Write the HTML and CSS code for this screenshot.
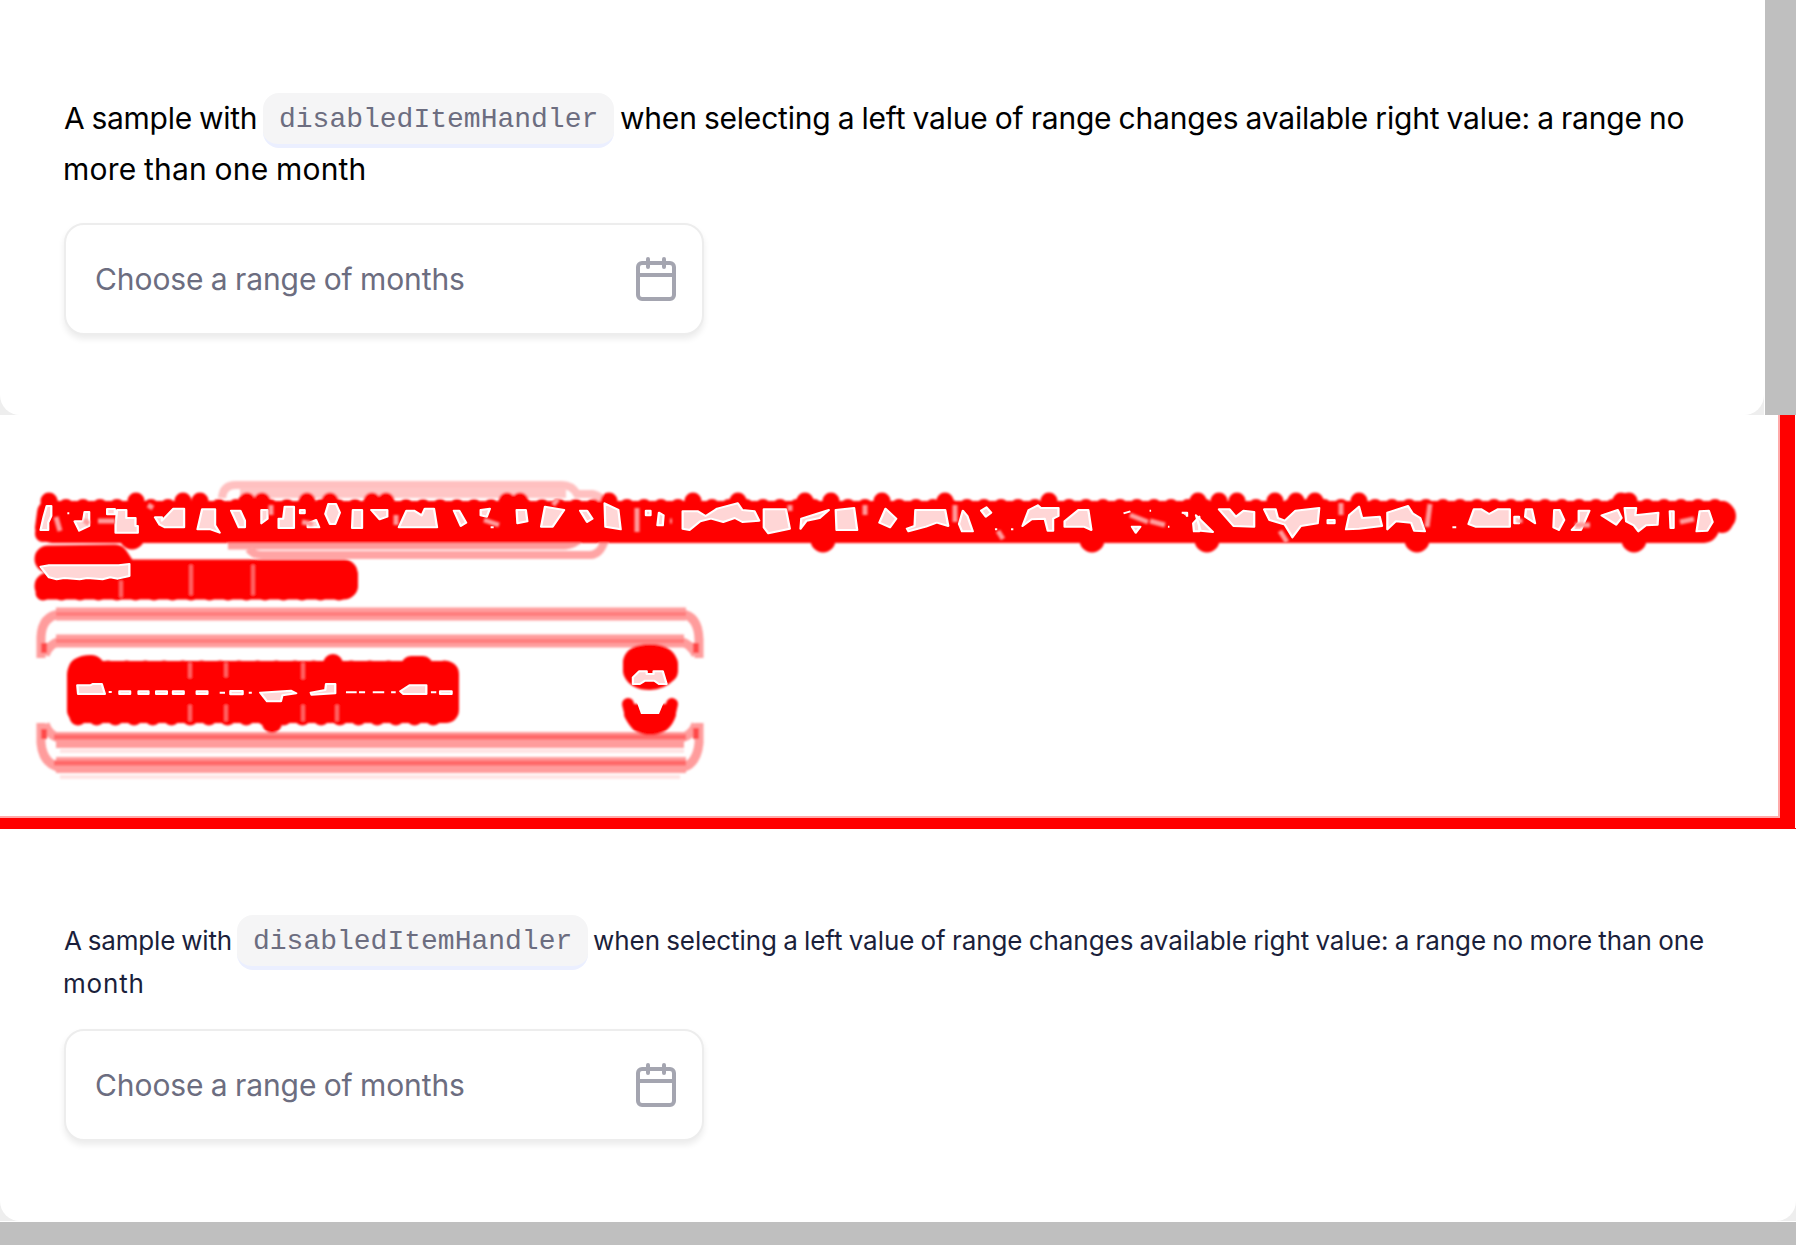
FILE: index.html
```
<!DOCTYPE html>
<html lang="en">
<head>
<meta charset="utf-8">
<title>Month range input</title>
<link rel="stylesheet" href="styles.css">
</head>
<body>
<section class="panel before">
  <div class="card">
    <p class="line"><span class="lead">A sample with</span><code class="code">disabledItemHandler</code><span class="rest">when selecting a left value of range changes available right value: a range no</span></p>
    <p class="line tail">more than one month</p>
    <div class="field">
      <span class="placeholder">Choose a range of months</span>
      <svg class="calendar" width="40" height="46" viewBox="0 0 40 46" fill="none" stroke="#a4a5b0" stroke-width="4" stroke-linecap="round"><rect x="2" y="7" width="36" height="36" rx="4"/><path d="M2 19H38M12 3V11M28 3V11"/></svg>
    </div>
  </div>
</section>

<section class="panel diff">
  <svg width="1796" height="415" viewBox="0 0 1796 415" fill="none">
    <defs><filter id="soft" x="-2%" y="-2%" width="104%" height="104%"><feGaussianBlur stdDeviation="1"/></filter></defs>
    <g filter="url(#soft)">
      <path stroke="#ffc0c0" stroke-width="8" d="M222 83Q223 70 236 70H562Q572 70 577 79H592Q605 82 607 94"/>
      <path stroke="#ffc6c6" stroke-width="10" d="M240 78H566"/>
      <path stroke="#ff9c9c" stroke-width="9" d="M228 130H565Q574 129 580 123"/>
      <path stroke="#ffa4a4" stroke-width="8" d="M249 134Q253 140 262 140H590Q603 140 607 116"/>
      <g stroke="#ff9c9c" stroke-width="13">
        <path d="M56 199H686M56 226H684"/>
        <path stroke-width="16" d="M56 325H684M56 350H686"/>
        <path stroke-width="9" d="M41 243V222Q42 201 60 199M45 240Q49 229 60 226M682 199Q698 201 699 224V243M680 226Q691 229 696 240"/>
        <path stroke-width="9" d="M45 309Q49 321 60 323M41 308V328Q43 350 62 353M680 323Q692 321 696 309M682 353Q697 349 699 328V308"/>
      </g>
      <path stroke="#ff7c7c" stroke-width="4" d="M56 199H686M56 226H684"/>
      <path stroke="#ff6868" stroke-width="5" d="M54 322H686M54 348H686"/>
      <path stroke="#ff4a4a" stroke-width="6" d="M44 228V238M44 314V324M696 228V238M696 313V324"/>
      <path stroke="#ffe4e4" stroke-width="4" d="M60 336H684M60 362H680"/>

      <g stroke="#f00" fill="#f00" stroke-linecap="round" stroke-linejoin="round">
        <path stroke-width="28" d="M51 98L49 113"/>
        <path stroke-width="30" d="M52 101H1721M52 113H1704"/>
        <path stroke-width="16" stroke-dasharray="0 17" d="M43 119H1706M66 92H1722"/>
        <path stroke-width="17" d="M49 86v1M136 86v1M183 86v1M200 86v1M247 86v1M262 86v1M307 86v1M330 86v1M372 86v1M386 86v1M507 86v1M520 86v1M609 86v1M693 86v1M738 86v1M805 86v1M831 86v1M882 86v1M945 86v1M1049 86v1M1198 86v1M1219 86v1M1237 86v1M1275 86v1M1296 86v1M1315 86v1M1359 86v1M1621 86v1M1629 86v1"/>
        <path stroke-width="22" d="M1722 97V107"/>
        <path stroke-width="25" d="M132 112V122M823 111V125M1092 111V125M1207 111V125M1417 111V125M1634 111V125"/>
        <path stroke-width="27" d="M48 144L115 143L125 158H344M48 171H344"/>
        <path stroke-width="15" stroke-dasharray="0 18.5" d="M43 178H350M137 155H350"/>
        <path stroke-width="24" d="M346 160V171"/>
        <rect stroke="none" x="67" y="246" width="392" height="62" rx="13"/>
        <path stroke-width="28" d="M82 256Q85 254 91 254"/>
        <path stroke-width="17" stroke-dasharray="0 18.7" d="M78 302H452M108 254H452"/>
        <path stroke-width="20" d="M333 249V270M411 251H423M272 290V308"/>
        <path stroke-width="24" d="M635 247Q637 241 650 241Q663 241 666 249V256Q659 263 650 263Q638 263 635 256Z"/>
        <path stroke-width="12" d="M628 289L631 301Q637 314 650 314Q664 314 669 302L672 289"/>
        <path stroke-width="16" d="M632 299L639 309H661L668 299"/>
      </g>
      <path stroke="#ff7070" stroke-width="3" d="M190 248V263M190 290V306M226 248V262M226 290V306M303 248V264M303 290V306M337 290V306M121 166V182M191 150V180M253 150V180"/>
    </g>
    <g fill="#ffd6d6" stroke="#fff" stroke-width="6" stroke-linejoin="round">
      <g transform="translate(0 45) scale(.3827 .3333)">
        <path d="M122 138h12v30l-8 20v22h-20l8-40zM176 160h5M195 184h22l4-28h12v42l-26 14zM280 147h20v16h-20zM306 150h24v24h24v24h6v20h-58v-24zM405 172h18v10l30-36h28v56h-50l-14-8zM528 148h34v48l12 22-24-10h-34zM604 152h24l12 30v20h-16zM683 150h16v26l-16 14zM744 140h24v64h-40v-28h12zM784 150h12v10h-12zM804 190l22-10 8 22h-30zM858 132h20l10 26-12 34h-14l-12-30zM922 150h24v54h-26zM970 150h42v20l-20 8zM1062 152h20l20 14 8-20h24l8 56h-100zM1186 152h14l18 36-14 10zM1256 150l24-4-8 24-16-4zM1282 202h8M1350 150h24l4 34-26 6zM1424 140l50 10-30 50h-30zM1516 152h18l14 24-14 10z"/>
        <path d="M106 320l22-4h182l28-4v36l-30 8-20-4-20 6-40-4-20 4-40-4-20 4-20-6z"/>
        <path d="M202 676h34l6-4h24l8 30h-70zM284 696h8M312 694h28v8h-28zM362 694h26v8h-26zM408 694h28v8h-28zM452 694h28v8h-28zM514 694h28v8h-28zM574 698h14M602 693h32v10h-32zM650 698h8M680 698l80-6 14 8-36 6-4 18h-36zM812 698l38-8 2-18h24v28l-62 4zM904 697h28M938 697h16M974 697h30M1022 697h12M1046 694l24-18h44v26h-60zM1126 697h14M1150 694h30v8h-30z"/>
      </g>
      <g transform="translate(600 45) scale(.3827 .3333)">
        <path d="M12 130l36 20 6 58-40-8zM120 152h12v14h-12zM154 158l12 8-2 30h-14zM216 154h40l20 14 30-22 54-16 12 20 32 4 12 28-44 4-20-12-30 12-32-10-28 8-28 26-18-4zM428 148h58l10 58-56 14-12-18zM526 176l72-26-24 24-34 8-16 24zM616 150l48-6 8 66h-54zM746 146l28 30-16 26-28-14zM824 150h78l8 48-30-10-28 12-46 14-4-8 20-8zM948 152l12 16 14 46h-28l-8-22zM996 152l14-10 12 16-14 12zM1032 208h6M1074 208h6M1120 150l24-14 8 8h46v24l-14 8v36h-14l-8-36-34 2-24 20zM1250 150h26l8 60-20-10h-50v-16zM1368 160l18-6M1436 152h4M1390 200h22l-12 18zM1484 200h4M1520 158h14v12M1550 190l16-20v44h-14z"/>
        <path d="M86 652l16-18h20v8h18v-8h24l10 38h-20l-12-10h-24l-14 10H86z"/>
      </g>
      <path fill="#fff" stroke="none" d="M636 285Q638 279 650 279Q662 279 664 287L659 299H641Z"/>
      <g transform="translate(1196 45) scale(.3827 .3333)">
        <path d="M0 166l44 50-32-4zM60 148h28l16 22 20-18 28 4v44l-54-2zM178 148h30l6 26 18 8 28-30 62-8-4 46-44 8-22 34-20-38-40-14zM344 180h18v10h-18zM392 208l8-42 26-26 8 34 46-4 6 28-60 8zM500 158l54-20 12 22 20 14 12 40-28-2-8-24-40-4-22 24zM670 202h10M712 192l14-44h20l20 14 22-14h32v52h-90zM832 170h12v20h-12zM862 148h16l8 42-26-20zM936 150h14l12 30-14 30-14-8zM1000 152h28l-22 58h-24l18-22zM1060 166l42-16 10 24-14 20zM1120 144h30l-2 22 60-8-2 36-30 2-20 18-12-18-20-12zM1238 154h10v50h-8zM1316 154l24-2 10 34-14 26-28 2z"/>
      </g>
    </g>
    <path filter="url(#soft)" stroke="#ff9c9c" stroke-width="5" d="M56 102L60 116M84 105L89 109M98 106L115 106M148 90L153 93M271 90V100M302 107L313 109M484 105L499 110M553 90L558 84M637 93V117M790 90V96M865 90V100M955 90V107M1130 100L1148 107M1280 116L1287 127M1341 88V100M1430 89L1427 112M1575 110H1590M1680 107L1694 104M396 100V110M670 106H672M998 116L1003 124M1150 106L1165 110M1520 104V108"/>
    <path fill="#ffaaaa" d="M1778 0h3v403H0v-2h1778z"/>
    <path fill="#f00" d="M1780 0h15v413h1v1H0V403H1780z"/>
  </svg>
</section>

<section class="panel after">
  <div class="card">
    <p class="line"><span class="lead">A sample with</span><code class="code">disabledItemHandler</code><span class="rest">when selecting a left value of range changes available right value: a range no more than one</span></p>
    <p class="line tail">month</p>
    <div class="field">
      <span class="placeholder">Choose a range of months</span>
      <svg class="calendar" width="40" height="46" viewBox="0 0 40 46" fill="none" stroke="#a4a5b0" stroke-width="4" stroke-linecap="round"><rect x="2" y="7" width="36" height="36" rx="4"/><path d="M2 19H38M12 3V11M28 3V11"/></svg>
    </div>
  </div>
</section>
</body>
</html>
```
FILE: styles.css
```
* { box-sizing: border-box; }
body { margin: 0; width: 1796px; background: #fff; font-family: Inter, "Liberation Sans", sans-serif; }
p { margin: 0; }

.panel { display: flex; height: 415px; overflow: hidden; }
.panel > svg { display: block; }
.before { background: linear-gradient(to right, #eee 1764px, #fff 1764px, #fff 1765px, #bfbfbf 1765px); }
.after { background: linear-gradient(to bottom, #eee 391px, #fff 391px, #fff 392px, #bfbfbf 392px); }

.card { background: #fff; padding: 92px 64px 0; border-radius: 0 0 20px 20px; }
.before .card { width: 1764px; height: 415px; }
.after .card { width: 1796px; height: 391px; padding-top: 85px; }

.line { display: flex; align-items: center; white-space: nowrap; word-spacing: -1px; }
.before .line { height: 51px; font-size: 30px; color: #000; }
.after .line { height: 51px; font-size: 26px; color: #1b1f3b; }
.lead { flex: none; width: 199px; letter-spacing: -0.3px; }
.after .lead { width: 173px; letter-spacing: -0.2px; }
.rest { margin-left: 6px; letter-spacing: -0.21px; }
.after .rest { margin-left: 5px; letter-spacing: -0.06px; }
.code {
  flex: none; width: 351px; height: 55px; margin-top: 6px; padding: 0 16px; line-height: 53px;
  font-family: "Liberation Mono", monospace; font-size: 28px; word-spacing: 0;
  color: #6c6d80; background: #f5f5f6; border-bottom: 4px solid #ebefff; border-radius: 16px;
}
.after .code { margin-top: 4px; }
.before .tail { letter-spacing: 0.2px; margin-left: -1px; }
.after .tail { height: 35px; margin-left: -1px; letter-spacing: 0.8px; }

.field {
  display: flex; align-items: center; justify-content: space-between;
  width: 640px; height: 112px; margin-top: 29px; padding: 0 26px 0 29px;
  border: 2px solid #ededed; border-radius: 20px; background: #fff;
  box-shadow: 0 4px 6px rgba(0, 0, 0, 0.08);
}
.after .field { margin-top: 28px; }
.placeholder { font-size: 30px; color: #6c6d80; word-spacing: -1px; letter-spacing: -0.08px; white-space: nowrap; }
.calendar { flex: none; }
```
